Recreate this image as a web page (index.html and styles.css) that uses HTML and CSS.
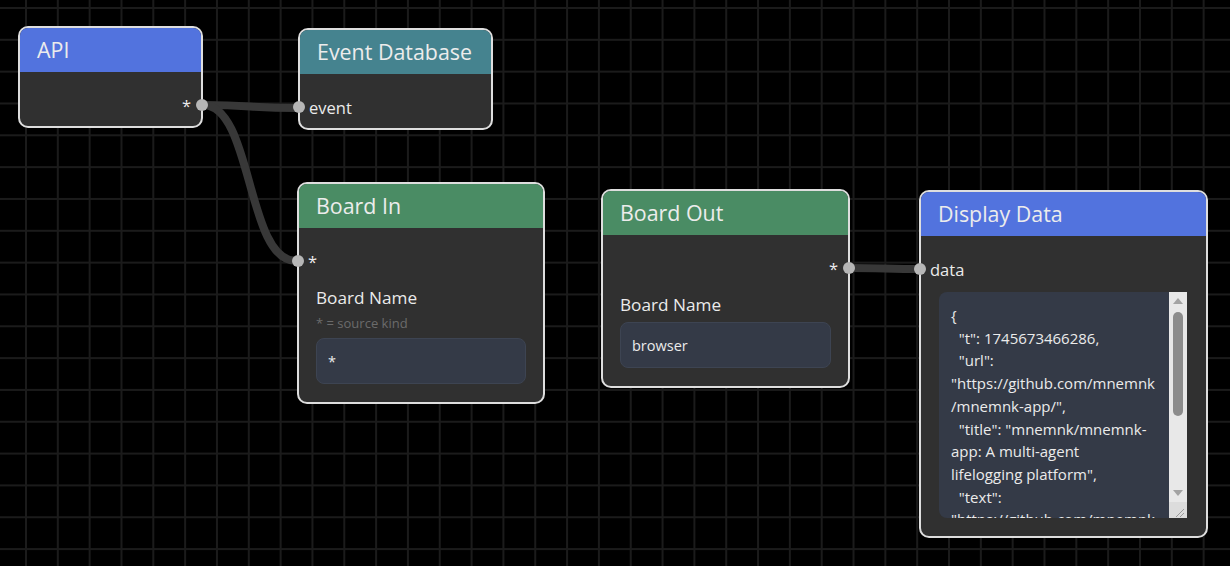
FILE: index.html
```html
<!DOCTYPE html>
<html lang="en">
<head>
  <meta charset="UTF-8">
  <meta name="viewport" content="width=device-width, initial-scale=1.0">
  <title>Agent Board</title>
  <link rel="stylesheet" href="styles.css">
</head>
<body>

  <div class="canvas">

    <!-- edges between node ports -->
    <svg class="wires" width="1230" height="566" viewBox="0 0 1230 566">
      <path d="M203 105 C253 105, 248 108, 298 108" />
      <path d="M203 105 C253 105, 246 261, 296 261" />
      <path d="M850 268 C880 268, 890 269, 920 269" />
    </svg>

    <div class="node node-api">
      <div class="node-header header-blue">API</div>
      <div class="node-body">
        <div class="port-row out">
          <span class="port-label">*</span>
          <span class="port"></span>
        </div>
      </div>
    </div>

    <div class="node node-db">
      <div class="node-header header-teal">Event Database</div>
      <div class="node-body">
        <div class="port-row in">
          <span class="port"></span>
          <span class="port-label">event</span>
        </div>
      </div>
    </div>

    <div class="node node-board-in">
      <div class="node-header header-green">Board In</div>
      <div class="node-body with-fields">
        <div class="port-row in">
          <span class="port"></span>
          <span class="port-label">*</span>
        </div>
        <div class="field">
          <div class="field-label">Board Name</div>
          <div class="field-hint">* = source kind</div>
          <div class="field-input">*</div>
        </div>
      </div>
    </div>

    <div class="node node-board-out">
      <div class="node-header header-green">Board Out</div>
      <div class="node-body with-fields">
        <div class="port-row out">
          <span class="port-label">*</span>
          <span class="port"></span>
        </div>
        <div class="field">
          <div class="field-label">Board Name</div>
          <div class="field-input no-hint">browser</div>
        </div>
      </div>
    </div>

    <div class="node node-display">
      <div class="node-header header-blue">Display Data</div>
      <div class="node-body with-fields">
        <div class="port-row in">
          <span class="port"></span>
          <span class="port-label">data</span>
        </div>
        <div class="data-view">
          <div class="data-text">{
  "t": 1745673466286,
  "url":
"https://github.com/mnemnk
/mnemnk-app/",
  "title": "mnemnk/mnemnk-
app: A multi-agent
lifelogging platform",
  "text":
"https://github.com/mnemnk
/mnemnk-app/"
}</div>
          <div class="scrollbar">
            <div class="sb-btn"><span class="arrow-up"></span></div>
            <div class="sb-track"><div class="sb-thumb"></div></div>
            <div class="sb-btn"><span class="arrow-down"></span></div>
            <div class="sb-corner">
              <svg width="17" height="17" viewBox="0 0 17 17">
                <path d="M7 15 L15 7 M11 15 L15 11" />
              </svg>
            </div>
          </div>
        </div>
      </div>
    </div>

  </div>

</body>
</html>
```

FILE: styles.css
```css
* {
  box-sizing: border-box;
}

html, body {
  margin: 0;
  height: 100%;
}

body {
  background-color: #000;
  font-family: "Open Sans", "Noto Sans", sans-serif;
  color: #ebebeb;
  overflow: hidden;
}

.canvas {
  position: relative;
  width: 1230px;
  height: 566px;
  background-color: #000;
  background-image:
    linear-gradient(to right, #1b1b1b 2px, transparent 2px),
    linear-gradient(to bottom, #1b1b1b 2px, transparent 2px);
  background-size: 31.83px 31.83px;
  background-position: 25px 7px;
}

.wires {
  position: absolute;
  left: 0;
  top: 0;
}

.wires path {
  fill: none;
  stroke: #383838;
  stroke-width: 8;
  stroke-linecap: round;
}

/* nodes */
.node {
  position: absolute;
  background-color: #303030;
  border: 2px solid #dedede;
  border-radius: 10px;
}

.node-api { left: 18px; top: 26px; width: 185px; }
.node-db { left: 298px; top: 28px; width: 195px; }
.node-board-in { left: 297px; top: 182px; width: 248px; }
.node-board-out { left: 601px; top: 189px; width: 249px; }
.node-display { left: 919px; top: 190px; width: 289px; }

.node-header {
  height: 44px;
  line-height: 44px;
  padding: 0 17px;
  font-size: 21.4px;
  color: #ececec;
  border-radius: 8px 8px 0 0;
}

.header-blue { background-color: #5273de; }
.header-teal { background-color: #45838f; }
.header-green { background-color: #4a8c64; }

.node-body {
  padding: 20px 0 8px;
}

.node-body.with-fields {
  padding-bottom: 18px;
}

/* ports */
.port-row {
  position: relative;
  height: 26px;
  display: flex;
  align-items: center;
  padding: 0 9px;
  font-size: 16.5px;
  color: #ebebeb;
}

.port-row.out {
  justify-content: flex-end;
  padding-right: 10px;
}

.port {
  position: absolute;
  top: 7px;
  width: 12px;
  height: 12px;
  border-radius: 50%;
  background-color: #b6b6b6;
}

.port-row.in .port { left: -7px; }
.port-row.out .port { right: -7px; }

/* fields */
.field {
  padding: 12px 17px 0;
}

.field-label {
  font-size: 17.2px;
  line-height: 24px;
}

.field-hint {
  margin-top: 4px;
  font-size: 13px;
  line-height: 18px;
  color: #6b6b6b;
}

.field-input {
  display: flex;
  align-items: center;
  height: 46px;
  margin-top: 6px;
  padding: 0 11px;
  background-color: #343a47;
  border: 1px solid #3d4452;
  border-radius: 8px;
  font-size: 14.5px;
}

.field-input.no-hint {
  margin-top: 5px;
}

/* data view */
.data-view {
  display: flex;
  height: 226px;
  margin: 10px 19px 0 18px;
  background-color: #343a47;
  border-radius: 8px 0 0 8px;
  overflow: hidden;
}

.data-text {
  flex: 1;
  padding: 12px 0 0 12px;
  font-size: 15px;
  line-height: 22.7px;
  white-space: pre;
  overflow: hidden;
}

.scrollbar {
  width: 18px;
  display: flex;
  flex-direction: column;
  background-color: #e8e8e8;
}

.sb-btn {
  height: 17px;
  display: flex;
  align-items: center;
  justify-content: center;
}

.arrow-up {
  width: 0;
  height: 0;
  border-left: 5px solid transparent;
  border-right: 5px solid transparent;
  border-bottom: 6px solid #a3a3a3;
}

.arrow-down {
  width: 0;
  height: 0;
  border-left: 5px solid transparent;
  border-right: 5px solid transparent;
  border-top: 6px solid #a3a3a3;
}

.sb-track {
  flex: 1;
  padding: 3px 4px 0;
}

.sb-thumb {
  height: 104px;
  background-color: #8c8c8c;
  border-radius: 5px;
}

.sb-corner {
  height: 17px;
  background-color: #dcdcdc;
  border-top: 1px solid #e8e8e8;
}

.sb-corner svg {
  display: block;
}

.sb-corner path {
  stroke: #9a9a9a;
  stroke-width: 1;
  fill: none;
}
```
